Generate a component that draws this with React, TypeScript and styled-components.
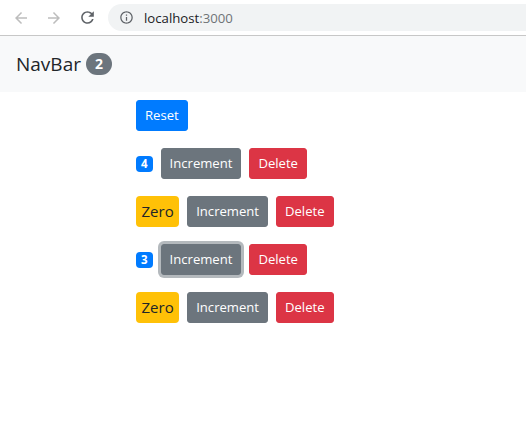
import styled, { createGlobalStyle, css } from 'styled-components';

const GlobalStyle = createGlobalStyle`
  body { margin: 0; background: #fff; font-family: 'Open Sans', 'Noto Sans', sans-serif; color: #212529; }
`;

const BrowserBar = styled.div`
  display: flex; align-items: center; height: 35px; padding-left: 5px;
  border-bottom: 1px solid #c7c7c7; background: #fff; overflow: hidden;
`;
const IconButton = styled.div<{ $muted?: boolean }>`
  width: 32px; height: 32px; margin-right: 1px; display: flex; align-items: center; justify-content: center;
  color: ${(p) => (p.$muted ? '#bdbdbd' : '#5f6368')};
`;
const Omnibox = styled.div`
  flex: 1; display: flex; align-items: center; gap: 10px; height: 27px; margin-left: 4px; margin-right: -20px;
  padding-left: 11px; border-radius: 14px; background: #f1f3f4;
`;
const Url = styled.span`
  font-size: 13.2px; color: #202124;
  span { color: #6f7377; }
`;

const NavBar = styled.nav`
  display: flex; align-items: center; height: 56px; padding: 0 16px; background: #f8f9fa;
`;
const Brand = styled.span`
  font-size: 19px; color: #212529; display: flex; align-items: center; gap: 5px;
`;
const PillBadge = styled.span`
  display: inline-block; font-size: 14px; font-weight: 700; line-height: 1; padding: 4px 9px;
  border-radius: 10rem; background: #6c757d; color: #fff;
`;

const Main = styled.main`
  display: flex; flex-direction: column; align-items: flex-start; gap: 17px; padding: 8px 0 0 136px;
`;
const Row = styled.div`
  display: flex; align-items: center; gap: 8px; height: 31px;
`;

const variants = {
  primary: '#007bff',
  secondary: '#6c757d',
  danger: '#dc3545',
};
const Button = styled.button<{ $variant: keyof typeof variants; $focused?: boolean }>`
  font-family: inherit; font-size: 13.1px; line-height: 21px; padding: 4px 8px; border-radius: 3px;
  border: 1px solid ${(p) => variants[p.$variant]}; background: ${(p) => variants[p.$variant]}; color: #fff;
  cursor: pointer;
  ${(p) => p.$focused && css`box-shadow: 0 0 0 3px rgba(130, 138, 145, 0.6);`}
`;

const CountBadge = styled.span<{ $zero: boolean }>`
  display: inline-block; border-radius: 4px; font-weight: 700;
  ${(p) =>
    p.$zero
      ? css`background: #ffc107; color: #212529; font-size: 15px; font-weight: 500; line-height: 19px; padding: 6px 5.5px;`
      : css`background: #007bff; color: #fff; font-size: 11.5px; line-height: 12px; padding: 2px 5px;`}
`;

const counters = [
  { id: 1, value: 4 },
  { id: 2, value: 0 },
  { id: 3, value: 3, focused: true },
  { id: 4, value: 0 },
];

export default function App() {
  return (
    <>
      <GlobalStyle />
      <BrowserBar>
        <IconButton $muted>
          <svg width="18" height="18" viewBox="0 0 24 24" fill="currentColor">
            <path d="M20 11H7.83l5.59-5.59L12 4l-8 8 8 8 1.41-1.41L7.83 13H20v-2z" />
          </svg>
        </IconButton>
        <IconButton $muted>
          <svg width="18" height="18" viewBox="0 0 24 24" fill="currentColor">
            <path d="M4 11h12.17l-5.59-5.59L12 4l8 8-8 8-1.41-1.41L16.17 13H4v-2z" />
          </svg>
        </IconButton>
        <IconButton>
          <svg width="19" height="19" viewBox="0 0 24 24" fill="currentColor">
            <path d="M17.65 6.35C16.2 4.9 14.21 4 12 4c-4.42 0-7.99 3.58-7.99 8s3.57 8 7.99 8c3.73 0 6.84-2.55 7.73-6h-2.08c-.82 2.33-3.04 4-5.65 4-3.31 0-6-2.69-6-6s2.69-6 6-6c1.66 0 3.14.69 4.22 1.78L13 11h7V4l-2.35 2.35z" />
          </svg>
        </IconButton>
        <Omnibox>
          <svg width="15" height="15" viewBox="0 0 24 24" fill="#5f6368">
            <path d="M11 7h2v2h-2zm0 4h2v6h-2zm1-9C6.48 2 2 6.48 2 12s4.48 10 10 10 10-4.48 10-10S17.52 2 12 2zm0 18c-4.41 0-8-3.59-8-8s3.59-8 8-8 8 3.59 8 8-3.59 8-8 8z" />
          </svg>
          <Url>localhost<span>:3000</span></Url>
        </Omnibox>
      </BrowserBar>

      <NavBar>
        <Brand>
          NavBar <PillBadge>2</PillBadge>
        </Brand>
      </NavBar>

      <Main>
        <Button $variant="primary">Reset</Button>
        {counters.map((c) => (
          <Row key={c.id}>
            <CountBadge $zero={c.value === 0}>{c.value === 0 ? 'Zero' : c.value}</CountBadge>
            <Button $variant="secondary" $focused={c.focused}>Increment</Button>
            <Button $variant="danger">Delete</Button>
          </Row>
        ))}
      </Main>
    </>
  );
}
